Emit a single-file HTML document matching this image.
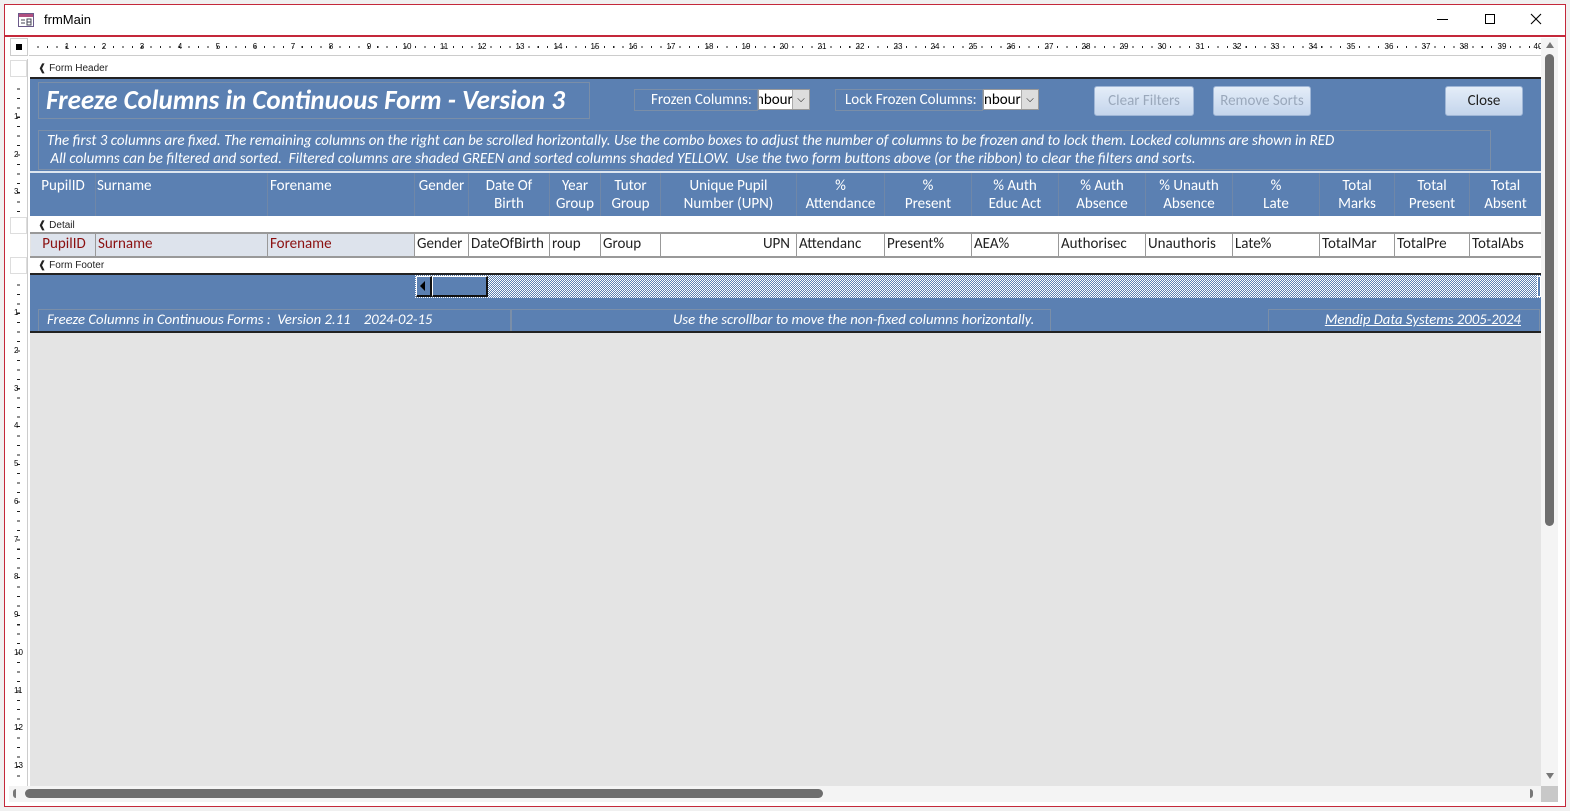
<!DOCTYPE html>
<html><head><meta charset="utf-8"><style>
*{box-sizing:border-box;margin:0;padding:0}
body{width:1570px;height:811px;background:#f0f0f0;font-family:"Liberation Sans",sans-serif;position:relative;overflow:hidden}
.a{position:absolute}
.win{left:4px;top:4px;width:1562px;height:803px;border:1px solid #c4283a;background:#fff}
.cal{font-family:"Carlito","Liberation Sans",sans-serif}
.col{position:absolute;top:173px;height:43px;border-right:1px solid #6f87a8;padding-top:4px;white-space:nowrap}
.cell{position:absolute;top:234px;height:22px;border-right:1px solid #999;font-size:15px;line-height:20px;padding-left:2px;white-space:nowrap;overflow:hidden;color:#222;background:#fff}
.rn{position:absolute;top:42px;font-size:8px;color:#000;transform:translateX(-50%)}
.vn{position:absolute;left:14px;font-size:8px;color:#000}
.btn{position:absolute;top:86px;height:30px;border:1px solid #9fb6d6;border-radius:3px;background:linear-gradient(#e4edf8,#c4d5ec);font-size:15px;text-align:center;line-height:28px}
.sec{font-size:10px;padding:4px 0 0 8px;color:#222}
</style></head><body>
<div class="a win"></div>
<svg class="a" style="left:18px;top:13px" width="16" height="14"><rect x="0.5" y="0.5" width="15" height="13" fill="#fff" stroke="#6a5a8a"/><rect x="1" y="1" width="14" height="3" fill="#b05080"/><path d="M3 7h4M3 10h4M9 6h4v6h-4zM9 9h4" stroke="#445" fill="none"/></svg>
<div class="a" style="left:44px;top:12px;font-size:13px;color:#000">frmMain</div>
<div class="a" style="left:1437px;top:19px;width:11px;height:1px;background:#000"></div>
<div class="a" style="left:1485px;top:14px;width:10px;height:10px;border:1px solid #000"></div>
<svg class="a" style="left:1530px;top:13px" width="12" height="12"><path d="M1 1L11 11M11 1L1 11" stroke="#000" stroke-width="1.1"/></svg>
<div class="a" style="left:5px;top:35px;width:1560px;height:2px;background:#c4283a"></div>
<div class="a" style="left:10px;top:38px;width:18px;height:18px;background:#fff;border:1px solid #ccc"></div>
<div class="a" style="left:16px;top:44px;width:6px;height:6px;background:#000"></div>
<div class="a" style="left:29px;top:38px;width:1512px;height:18px;background:#fff;border-bottom:1px solid #ccc"></div>
<div class="a" style="left:29px;top:46px;width:1512px;height:2px;background:repeating-linear-gradient(90deg,transparent 0,transparent 8.4px,#222 8.4px,#222 9.44px)"></div>
<div class="a" style="left:10px;top:59px;width:18px;height:727px;background:#fff;border-right:1px solid #ccc"></div>
<div class="a" style="left:10px;top:60px;width:17px;height:17px;border:1px solid #ddd"></div>
<div class="a" style="left:10px;top:217px;width:17px;height:17px;border:1px solid #ddd"></div>
<div class="a" style="left:10px;top:257px;width:17px;height:17px;border:1px solid #ddd"></div>
<div class="a" style="left:17px;top:80px;width:3px;height:135px;background:repeating-linear-gradient(180deg,transparent 0,transparent 8.4px,#222 8.4px,#222 9.44px)"></div>
<div class="a" style="left:17px;top:276px;width:3px;height:505px;background:repeating-linear-gradient(180deg,transparent 0,transparent 8.4px,#222 8.4px,#222 9.44px)"></div>
<div style="font-size:8px">
<span class="rn" style="left:67px">1</span><span class="rn" style="left:104px">2</span><span class="rn" style="left:142px">3</span><span class="rn" style="left:180px">4</span><span class="rn" style="left:218px">5</span><span class="rn" style="left:255px">6</span><span class="rn" style="left:293px">7</span><span class="rn" style="left:331px">8</span><span class="rn" style="left:369px">9</span><span class="rn" style="left:407px">10</span><span class="rn" style="left:444px">11</span><span class="rn" style="left:482px">12</span><span class="rn" style="left:520px">13</span><span class="rn" style="left:558px">14</span><span class="rn" style="left:595px">15</span><span class="rn" style="left:633px">16</span><span class="rn" style="left:671px">17</span><span class="rn" style="left:709px">18</span><span class="rn" style="left:746px">19</span><span class="rn" style="left:784px">20</span><span class="rn" style="left:822px">21</span><span class="rn" style="left:860px">22</span><span class="rn" style="left:898px">23</span><span class="rn" style="left:935px">24</span><span class="rn" style="left:973px">25</span><span class="rn" style="left:1011px">26</span><span class="rn" style="left:1049px">27</span><span class="rn" style="left:1086px">28</span><span class="rn" style="left:1124px">29</span><span class="rn" style="left:1162px">30</span><span class="rn" style="left:1200px">31</span><span class="rn" style="left:1237px">32</span><span class="rn" style="left:1275px">33</span><span class="rn" style="left:1313px">34</span><span class="rn" style="left:1351px">35</span><span class="rn" style="left:1389px">36</span><span class="rn" style="left:1426px">37</span><span class="rn" style="left:1464px">38</span><span class="rn" style="left:1502px">39</span><span class="rn" style="left:1538px">40</span>
<span class="vn" style="top:112px">1</span><span class="vn" style="top:150px">2</span><span class="vn" style="top:187px">3</span>
<span class="vn" style="top:308px">1</span><span class="vn" style="top:346px">2</span><span class="vn" style="top:384px">3</span><span class="vn" style="top:421px">4</span><span class="vn" style="top:459px">5</span><span class="vn" style="top:497px">6</span><span class="vn" style="top:535px">7</span><span class="vn" style="top:572px">8</span><span class="vn" style="top:610px">9</span><span class="vn" style="top:648px">10</span><span class="vn" style="top:686px">11</span><span class="vn" style="top:723px">12</span><span class="vn" style="top:761px">13</span>
</div>
<div class="a" style="left:30px;top:59px;width:1511px;height:727px;background:#e4e4e4"></div>
<div class="a sec" style="left:30px;top:59px;width:1511px;height:19px;background:#fff">❰ Form Header</div>
<div class="a" style="left:30px;top:77px;width:1511px;height:2px;background:#222"></div>
<div class="a" style="left:30px;top:79px;width:1511px;height:137px;background:#5b80b2"></div>
<div class="a cal" style="left:38px;top:82px;width:552px;height:37px;border:1px solid #7a8ea8;color:#fff;font-size:27px;font-weight:bold;font-style:italic;padding:1px 0 0 7px;white-space:nowrap">Freeze Columns in Continuous Form - Version 3</div>
<div class="a cal" style="left:634px;top:89px;width:124px;height:22px;border:1px solid #7a8ea8;color:#fff;font-size:15px;padding:1px 0 0 16px;white-space:nowrap">Frozen Columns:</div>
<div class="a cal" style="left:758px;top:89px;width:52px;height:21px;background:#fff;border:1px solid #999;font-size:15px;padding-top:1px;overflow:hidden;white-space:nowrap;text-indent:-3px">nbour</div>
<div class="a" style="left:792px;top:90px;width:17px;height:19px;background:#ddd;border-left:1px solid #aaa;font-size:10px;text-align:center;line-height:19px">⌵</div>
<div class="a cal" style="left:835px;top:89px;width:148px;height:22px;border:1px solid #7a8ea8;color:#fff;font-size:15px;padding:1px 0 0 9px;white-space:nowrap">Lock Frozen Columns:</div>
<div class="a cal" style="left:983px;top:89px;width:56px;height:21px;background:#fff;border:1px solid #999;font-size:15px;padding-top:1px;overflow:hidden;white-space:nowrap">nbour</div>
<div class="a" style="left:1021px;top:90px;width:17px;height:19px;background:#ddd;border-left:1px solid #aaa;font-size:10px;text-align:center;line-height:19px">⌵</div>
<div class="btn cal" style="left:1094px;width:100px;color:#9aa8bb">Clear Filters</div>
<div class="btn cal" style="left:1213px;width:98px;color:#9aa8bb">Remove Sorts</div>
<div class="btn cal" style="left:1445px;width:78px;color:#222">Close</div>
<div class="a cal" style="left:38px;top:130px;width:1453px;height:40px;border:1px solid #7a8ea8;color:#fff;font-size:15px;font-style:italic;line-height:18px;padding:1px 0 0 8px;white-space:nowrap">The first 3 columns are fixed. The remaining columns on the right can be scrolled horizontally. Use the combo boxes to adjust the number of columns to be frozen and to lock them. Locked columns are shown in RED<br>&nbsp;All columns can be filtered and sorted.&nbsp; Filtered columns are shaded GREEN and sorted columns shaded YELLOW.&nbsp; Use the two form buttons above (or the ribbon) to clear the filters and sorts.</div>
<div class="a" style="left:30px;top:171px;width:1511px;height:2px;background:#dde6f0"></div>
<div class="cal" style="color:#fff;font-size:15px;line-height:18px">
<div class="col" style="left:31px;width:65px;text-align:center">PupilID</div>
<div class="col" style="left:96px;width:172px;padding-left:1px">Surname</div>
<div class="col" style="left:268px;width:147px;padding-left:2px">Forename</div>
<div class="col" style="left:415px;width:54px;text-align:center">Gender</div>
<div class="col" style="left:469px;width:81px;text-align:center">Date Of<br>Birth</div>
<div class="col" style="left:550px;width:51px;text-align:center">Year<br>Group</div>
<div class="col" style="left:601px;width:60px;text-align:center">Tutor<br>Group</div>
<div class="col" style="left:661px;width:136px;text-align:center">Unique Pupil<br>Number (UPN)</div>
<div class="col" style="left:797px;width:88px;text-align:center">%<br>Attendance</div>
<div class="col" style="left:885px;width:87px;text-align:center">%<br>Present</div>
<div class="col" style="left:972px;width:87px;text-align:center">% Auth<br>Educ Act</div>
<div class="col" style="left:1059px;width:87px;text-align:center">% Auth<br>Absence</div>
<div class="col" style="left:1146px;width:87px;text-align:center">% Unauth<br>Absence</div>
<div class="col" style="left:1233px;width:87px;text-align:center">%<br>Late</div>
<div class="col" style="left:1320px;width:75px;text-align:center">Total<br>Marks</div>
<div class="col" style="left:1395px;width:75px;text-align:center">Total<br>Present</div>
<div class="col" style="left:1470px;width:71px;text-align:center;border:none">Total<br>Absent</div>
</div>
<div class="a sec" style="left:30px;top:216px;width:1511px;height:18px;background:#fff;border-bottom:2px solid #999">❰ Detail</div>
<div class="a" style="left:30px;top:256px;width:1511px;height:2px;background:#999"></div>
<div class="cal">
<div class="cell" style="left:31px;width:65px;background:#dde3ec;color:#8b1010;text-align:center">PupilID</div>
<div class="cell" style="left:96px;width:172px;background:#dde3ec;color:#8b1010">Surname</div>
<div class="cell" style="left:268px;width:147px;background:#dde3ec;color:#8b1010">Forename</div>
<div class="cell" style="left:415px;width:54px">Gender</div>
<div class="cell" style="left:469px;width:81px">DateOfBirth</div>
<div class="cell" style="left:550px;width:51px">roup</div>
<div class="cell" style="left:601px;width:60px">Group</div>
<div class="cell" style="left:661px;width:136px;text-align:right;padding-right:6px">UPN</div>
<div class="cell" style="left:797px;width:88px">Attendanc</div>
<div class="cell" style="left:885px;width:87px">Present%</div>
<div class="cell" style="left:972px;width:87px">AEA%</div>
<div class="cell" style="left:1059px;width:87px">Authorisec</div>
<div class="cell" style="left:1146px;width:87px">Unauthoris</div>
<div class="cell" style="left:1233px;width:87px">Late%</div>
<div class="cell" style="left:1320px;width:75px">TotalMar</div>
<div class="cell" style="left:1395px;width:75px">TotalPre</div>
<div class="cell" style="left:1470px;width:71px;border:none">TotalAbs</div>
</div>
<div class="a sec" style="left:30px;top:258px;width:1511px;height:16px;background:#fff;padding-top:2px">❰ Form Footer</div>
<div class="a" style="left:30px;top:273px;width:1511px;height:2px;background:#222"></div>
<div class="a" style="left:30px;top:275px;width:1511px;height:56px;background:#5b80b2"></div>
<div class="a" style="left:415px;top:275px;width:1126px;height:23px;background:repeating-conic-gradient(#5b80b2 0 25%,#fff 0 50%) 0 0/2px 2px"></div>
<div class="a" style="left:416px;top:276px;width:16px;height:21px;border:1px solid #fff;border-right:2px solid #111;border-bottom:2px solid #111;background:#5b80b2"></div>
<svg class="a" style="left:420px;top:281px" width="6" height="10"><path d="M5 0V10L0 5Z" fill="#000"/></svg>
<div class="a" style="left:432px;top:276px;width:56px;height:21px;border:1px solid #fff;border-right:2px solid #111;border-bottom:2px solid #111;background:#5b80b2"></div>
<div class="a" style="left:1537px;top:276px;width:4px;height:21px;border:1px solid #fff;background:#5b80b2"></div>
<div class="a cal" style="left:38px;top:309px;width:473px;height:22px;border:1px solid #7a8ea8;border-bottom:none;color:#fff;font-size:14.7px;font-style:italic;padding:0 0 0 8px;white-space:nowrap">Freeze Columns in Continuous Forms :&nbsp; Version 2.11&nbsp;&nbsp;&nbsp; 2024-02-15</div>
<div class="a cal" style="left:511px;top:309px;width:540px;height:22px;border:1px solid #7a8ea8;border-bottom:none;color:#fff;font-size:14.7px;font-style:italic;padding-left:161px;white-space:nowrap">Use the scrollbar to move the non-fixed columns horizontally.</div>
<div class="a cal" style="left:1268px;top:309px;width:272px;height:22px;border:1px solid #7a8ea8;border-bottom:none;color:#fff;font-size:14.7px;font-style:italic;padding:0 18px 0 0;text-align:right;text-decoration:underline;white-space:nowrap">Mendip Data Systems 2005-2024</div>
<div class="a" style="left:30px;top:331px;width:1511px;height:2px;background:#222"></div>
<div class="a" style="left:1541px;top:38px;width:17px;height:748px;background:#f4f4f4"></div>
<svg class="a" style="left:1545px;top:41px" width="10" height="8"><path d="M5 1L9 7H1Z" fill="#777"/></svg>
<div class="a" style="left:1545px;top:54px;width:9px;height:472px;background:#6e6e6e;border-radius:5px"></div>
<svg class="a" style="left:1545px;top:772px" width="10" height="8"><path d="M5 7L9 1H1Z" fill="#777"/></svg>
<div class="a" style="left:9px;top:786px;width:1532px;height:16px;background:#f4f4f4"></div>
<div class="a" style="left:1541px;top:786px;width:17px;height:16px;background:#c8c8c8"></div>
<div class="a" style="left:13px;top:789px;width:3px;height:9px;background:#777;border-radius:3px 0 0 3px"></div>
<div class="a" style="left:25px;top:789px;width:798px;height:9px;background:#6e6e6e;border-radius:5px"></div>
<div class="a" style="left:1530px;top:789px;width:3px;height:9px;background:#777;border-radius:0 3px 3px 0"></div>
</body></html>
